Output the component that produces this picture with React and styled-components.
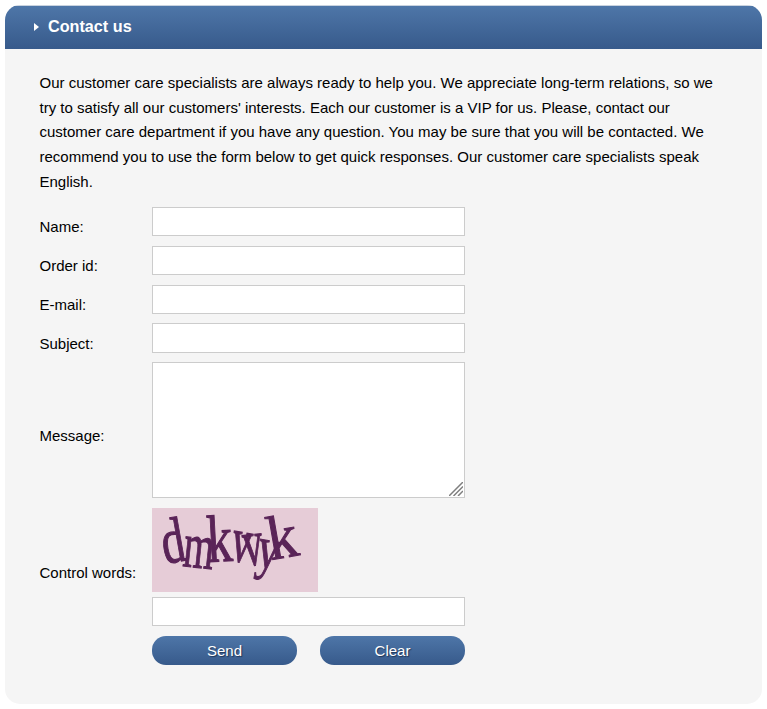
import styled, { createGlobalStyle } from "styled-components";

const GlobalStyle = createGlobalStyle`
  html, body { margin: 0; padding: 0; background: #fff; }
  body { font-family: "Liberation Sans", Arial, sans-serif; color: #000; }
`;

const Page = styled.div`
  width: 767px;
  height: 709px;
  box-sizing: border-box;
  padding: 5px 5px 5px;
`;

const Panel = styled.section`
  width: 757px;
  height: 699px;
  background: #f5f5f5;
  border-radius: 15px;
  overflow: hidden;
`;

const Header = styled.header`
  height: 44px;
  box-sizing: border-box;
  display: flex;
  align-items: center;
  gap: 9px;
  padding: 0 0 2px 29px;
  background: linear-gradient(#4e76a8, #375a8b);
  border-top: 1px solid #c9d3df;
`;

const Arrow = styled.span`
  width: 0;
  height: 0;
  border-left: 5px solid #fff;
  border-top: 4.5px solid transparent;
  border-bottom: 4.5px solid transparent;
`;

const Title = styled.h1`
  margin: 0;
  font-size: 16.2px;
  font-weight: 700;
  color: #fff;
`;

const Body = styled.div`
  padding: 22px 30px 0 34.5px;
`;

const Intro = styled.p`
  margin: 0 0 12.5px;
  font-size: 15px;
  line-height: 24.7px;
`;

const Form = styled.form`
  display: flex;
  flex-direction: column;
  gap: 9.5px;
`;

const Row = styled.div`
  display: grid;
  grid-template-columns: 112.5px 313px;
  align-items: center;
`;

const Label = styled.label`
  font-size: 15px;
  padding-top: ${(props) => props.$top || "10px"};
`;

const TextInput = styled.input`
  display: block;
  width: 100%;
  height: 29.3px;
  box-sizing: border-box;
  border: 1px solid #ccc;
  background: #fff;
  margin: 0;
  padding: 0 4px;
`;

const MessageCell = styled.div`
  position: relative;
`;

const TextBox = styled.textarea`
  display: block;
  width: 100%;
  height: 136px;
  box-sizing: border-box;
  border: 1px solid #ccc;
  border-radius: 0;
  background: #fff;
  margin: 0;
  padding: 4px;
  resize: none;
`;

const Grip = styled.svg`
  position: absolute;
  right: 2px;
  bottom: 2px;
  width: 14px;
  height: 14px;
  pointer-events: none;
`;

const CaptchaCell = styled.div`
  display: flex;
  flex-direction: column;
  gap: 5px;
`;

const Captcha = styled.svg`
  display: block;
  width: 166px;
  height: 84px;
  background: #e6ccd7;
`;

const CaptchaWord = styled.g`
  filter: blur(0.35px);
`;

const CaptchaLetter = styled.text`
  font-family: "Liberation Serif", "Times New Roman", serif;
  font-size: 46px;
  fill: #5a2458;
  stroke: #5a2458;
  stroke-width: 0.8;
`;

const Buttons = styled.div`
  grid-column: 2;
  display: flex;
  justify-content: space-between;
`;

const Button = styled.button`
  width: 145px;
  height: 29px;
  padding: 0;
  border: none;
  border-radius: 14px;
  background: linear-gradient(#4e76a8, #375a8b);
  color: #fff;
  font-family: "Liberation Sans", Arial, sans-serif;
  font-size: 15px;
  text-shadow: 1px 1px 1px #1f3558;
`;

// x, y is the left end of the baseline, sx/sy stretch the letter to the captcha's shape
const letters = [
  { ch: "d", x: 13, y: 56, r: -10, sx: 1.0, sy: 1.4 },
  { ch: "m", x: 30, y: 58, r: 6, sx: 0.85, sy: 1.4 },
  { ch: "k", x: 56, y: 54, r: -3, sx: 1.1, sy: 1.45 },
  { ch: "v", x: 77, y: 52, r: 10, sx: 0.85, sy: 1.4 },
  { ch: "v", x: 93, y: 58, r: -6, sx: 0.85, sy: 1.45 },
  { ch: "y", x: 103, y: 58, r: 10, sx: 0.95, sy: 1.3 },
  { ch: "k", x: 119, y: 52, r: -10, sx: 1.3, sy: 1.35 },
];

const App = () => {
  return (
    <Page>
      <GlobalStyle />
      <Panel>
        <Header>
          <Arrow />
          <Title>Contact us</Title>
        </Header>
        <Body>
          <Intro>
            Our customer care specialists are always ready to help you. We appreciate long-term relations, so we
            <br />
            try to satisfy all our customers' interests. Each our customer is a VIP for us. Please, contact our
            <br />
            customer care department if you have any question. You may be sure that you will be contacted. We
            <br />
            recommend you to use the form below to get quick responses. Our customer care specialists speak
            <br />
            English.
          </Intro>
          <Form onSubmit={(e) => e.preventDefault()}>
            <Row>
              <Label htmlFor="name">Name:</Label>
              <TextInput id="name" type="text" />
            </Row>
            <Row>
              <Label htmlFor="order">Order id:</Label>
              <TextInput id="order" type="text" />
            </Row>
            <Row>
              <Label htmlFor="email">E-mail:</Label>
              <TextInput id="email" type="text" />
            </Row>
            <Row>
              <Label htmlFor="subject">Subject:</Label>
              <TextInput id="subject" type="text" />
            </Row>
            <Row>
              <Label htmlFor="message" $top="11px">Message:</Label>
              <MessageCell>
                <TextBox id="message" />
                <Grip viewBox="0 0 14 14">
                  <path d="M0 14L14 0M4.5 14L14 4.5M9 14L14 9" stroke="#7f7f7f" strokeWidth="1.5" fill="none" />
                </Grip>
              </MessageCell>
            </Row>
            <Row>
              <Label htmlFor="control" $top="11px">Control words:</Label>
              <CaptchaCell>
                <Captcha viewBox="0 0 166 84">
                  <CaptchaWord>
                    {letters.map((l, i) => (
                      <CaptchaLetter
                        key={i}
                        transform={`translate(${l.x} ${l.y}) rotate(${l.r}) scale(${l.sx} ${l.sy})`}
                      >
                        {l.ch}
                      </CaptchaLetter>
                    ))}
                  </CaptchaWord>
                </Captcha>
                <TextInput id="control" type="text" />
              </CaptchaCell>
            </Row>
            <Row>
              <Buttons>
                <Button type="submit">Send</Button>
                <Button type="reset">Clear</Button>
              </Buttons>
            </Row>
          </Form>
        </Body>
      </Panel>
    </Page>
  );
};

export default App;
